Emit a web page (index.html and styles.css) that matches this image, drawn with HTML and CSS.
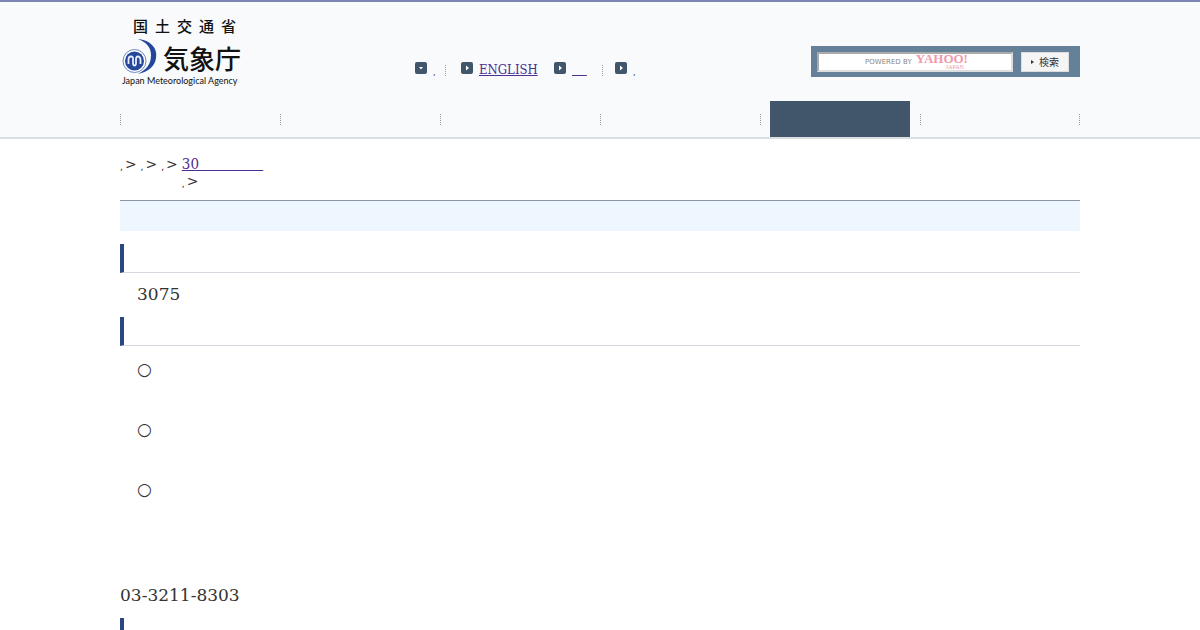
FILE: index.html
```html
<!DOCTYPE html>
<html lang="ja">
<head>
    <meta charset="UTF-8">
    <meta name="viewport" content="width=device-width, initial-scale=1.0">
    <title>気象庁</title>
    <link rel="stylesheet" href="styles.css">
</head>
<body>
    <header class="header">
        <div class="container header-top">
            <a class="logo" href="#">
                <span class="logo-ministry"><span>国</span><span>土</span><span>交</span><span>通</span><span>省</span></span>
                <span class="logo-main">
                    <svg class="logo-mark" width="38" height="36" viewBox="0 0 38 36" aria-hidden="true">
                        <path d="M16 0C28 1 36 9 34 19C33 28 25 33 16 35C25 30 29 25 29 16C29 8 24 3 16 0Z" fill="#24479b"/>
                        <circle cx="12.500" cy="22" r="11.500" fill="#fff" stroke="#6f88bf" stroke-width="1"/>
                        <circle cx="12.500" cy="22" r="9.500" fill="#24479b"/>
                        <path d="M6.500 25V20.500Q6.500 17.500 9 17.500T11 20.500V24Q11 26.500 12.500 26.500T14 24V20.500Q14 17.500 16 17.500T18.500 20.500V25" fill="none" stroke="#e6edf8" stroke-width="1.800"/>
                    </svg>
                    <span class="logo-name">気象庁</span>
                </span>
                <span class="logo-en">Japan Meteorological Agency</span>
            </a>
            <ul class="tools">
                <li class="tool-first">
                    <svg class="arrow" width="12" height="12" viewBox="0 0 12 12" aria-hidden="true"><rect width="12" height="12" rx="2" fill="#40566b"/><path d="M4 5H8L6 7.500Z" fill="#fff"/></svg>
                    <a class="mark" href="#">,</a>
                </li>
                <li class="tool-english">
                    <svg class="arrow" width="12" height="12" viewBox="0 0 12 12" aria-hidden="true"><rect width="12" height="12" rx="2" fill="#40566b"/><path d="M5 3.500V8.500L8 6Z" fill="#fff"/></svg>
                    <a href="#">ENGLISH</a>
                </li>
                <li class="tool-blank">
                    <svg class="arrow" width="12" height="12" viewBox="0 0 12 12" aria-hidden="true"><rect width="12" height="12" rx="2" fill="#40566b"/><path d="M5 3.500V8.500L8 6Z" fill="#fff"/></svg>
                    <a href="#">&nbsp;&nbsp;&nbsp;&nbsp;</a>
                </li>
                <li class="tool-last">
                    <svg class="arrow" width="12" height="12" viewBox="0 0 12 12" aria-hidden="true"><rect width="12" height="12" rx="2" fill="#40566b"/><path d="M5 3.500V8.500L8 6Z" fill="#fff"/></svg>
                    <a class="mark" href="#">,</a>
                </li>
            </ul>
            <form class="search">
                <div class="search-box">
                    <input class="search-input" id="search" type="text">
                    <label class="search-label" for="search">POWERED BY <span class="yahoo">YAHOO!<small>JAPAN</small></span></label>
                </div>
                <button class="search-button" type="submit"><svg width="4" height="6" viewBox="0 0 4 6" aria-hidden="true"><path d="M0 1L3 3L0 5Z" fill="#333"/></svg>検索</button>
            </form>
        </div>
        <nav class="container nav">
            <a href="#"></a>
            <a href="#"></a>
            <a href="#"></a>
            <a href="#"></a>
            <a class="current" href="#"></a>
            <a href="#"></a>
        </nav>
    </header>

    <main class="container">
        <div class="breadcrumb">
            <span><a class="mark" href="#">,</a>&gt;</span>
            <span><a class="mark" href="#">,</a>&gt;</span>
            <span><a class="mark" href="#">,</a>&gt;</span>
            <div class="breadcrumb-year">
                <a href="#">30&nbsp;&nbsp;&nbsp;&nbsp;&nbsp;&nbsp;&nbsp;&nbsp;&nbsp;&nbsp;&nbsp;&nbsp;&nbsp;&nbsp;&nbsp;</a>
                <span><a class="mark" href="#">,</a>&gt;</span>
            </div>
        </div>
        <h1 class="title"></h1>
        <h2 class="section-title"></h2>
        <p class="text">3075</p>
        <h2 class="section-title"></h2>
        <ul class="list">
            <li>○</li>
            <li>○</li>
            <li>○</li>
        </ul>
        <p class="phone">03-3211-8303</p>
        <h2 class="section-title"></h2>
    </main>
</body>
</html>
```
FILE: styles.css
```css
* {
    box-sizing: border-box;
}
body {
    margin: 0;
    font-family: 'DejaVu Serif', 'Noto Sans CJK JP', serif;
    font-size: 17px;
    line-height: 30px;
    color: #333;
    background-color: #fff;
}
a {
    color: #4b2f91;
}
ul {
    list-style: none;
    margin: 0;
    padding: 0;
}
.container {
    max-width: 960px;
    margin: 0 auto;
}
.header {
    border-top: 2px solid #7b86b2;
    border-bottom: 2px solid #dcdfe2;
    background-color: #f8fafc;
}
.header-top {
    display: flex;
    align-items: flex-start;
    height: 99px;
}

/* logo */
.logo {
    display: flex;
    flex-direction: column;
    width: 124px;
    padding: 15px 0 0 2px;
    color: #111;
    text-decoration: none;
    font-family: 'Noto Sans CJK JP', sans-serif;
}
.logo-ministry {
    display: flex;
    gap: 7px;
    padding-left: 11px;
    font-size: 15px;
    font-weight: 500;
    line-height: 18px;
}
.logo-main {
    display: flex;
    gap: 3px;
    height: 39px;
    padding-top: 4px;
}
.logo-name {
    font-size: 26px;
    font-weight: 500;
    line-height: 38px;
}
.logo-en {
    font-family: Lato, sans-serif;
    font-size: 9px;
    line-height: 14px;
    white-space: nowrap;
}

/* tool links */
.tools {
    display: flex;
    padding-top: 58px;
    margin-left: 171px;
    font-family: 'DejaVu Serif Condensed', 'DejaVu Serif', serif;
    font-stretch: condensed;
    font-size: 13px;
    line-height: 20px;
}
.tools li {
    display: flex;
    gap: 6px;
}
.arrow {
    flex: none;
    margin-top: 2px;
}
.tool-first {
    width: 46px;
}
.tool-english {
    width: 93px;
}
.tool-blank {
    width: 61px;
}
.tool-first,
.tool-blank {
    background: repeating-linear-gradient(#999 0 1px, transparent 1px 2px) right 15px top 5px / 1px 11px no-repeat;
}
.tool-blank {
    background-position: right 12px top 5px;
}
.mark {
    font-size: 9px;
    text-decoration: none;
    color: #222;
}
.tools .mark {
    padding-top: 2px;
}

/* search */
.search {
    display: flex;
    gap: 8px;
    width: 269px;
    margin: 44px 0 0 auto;
    padding: 6px 11px 5px 6px;
    background-color: #658199;
}
.search-box {
    position: relative;
    flex: 1;
}
.search-input {
    display: block;
    width: 100%;
    height: 20px;
    border: 2px solid #aaa;
    border-right-color: #ddd;
    border-bottom-color: #ddd;
    background-color: #fff;
}
.search-label {
    position: absolute;
    top: 2px;
    left: 48px;
    display: flex;
    gap: 4px;
    font-family: 'DejaVu Sans', sans-serif;
    font-size: 7px;
    line-height: 16px;
    color: #888;
    white-space: nowrap;
}
.yahoo {
    display: flex;
    flex-direction: column;
    font-family: 'Liberation Serif', serif;
    font-size: 13px;
    font-weight: bold;
    line-height: 10px;
    color: #ee9aab;
}
.yahoo small {
    align-self: flex-end;
    padding-right: 4px;
    font-size: 6px;
    font-weight: normal;
    line-height: 6px;
}
.search-button {
    display: flex;
    align-items: center;
    justify-content: center;
    gap: 4px;
    width: 48px;
    height: 20px;
    padding: 0;
    border: 1px solid #ddd;
    background-color: #f5f5f5;
    font-family: 'Noto Sans CJK JP', sans-serif;
    font-size: 10px;
    line-height: 16px;
    color: #333;
}

/* global menu */
.nav {
    display: grid;
    grid-template-columns: repeat(6, 1fr);
    background: repeating-linear-gradient(#999 0 1px, transparent 1px 2px) right 13px / 1px 11px no-repeat;
}
.nav a {
    height: 36px;
    padding: 0 10px;
    background: repeating-linear-gradient(#999 0 1px, transparent 1px 2px) left 13px / 1px 11px no-repeat;
}
.nav .current::before {
    content: "";
    display: block;
    height: 36px;
    background-color: #41566b;
}

/* contents */
.breadcrumb {
    display: flex;
    gap: 4px;
    padding-top: 16px;
    font-size: 14px;
    line-height: 18px;
}
.breadcrumb span {
    display: flex;
    gap: 2px;
    font-family: 'DejaVu Sans', sans-serif;
}
.breadcrumb .mark {
    padding-top: 3px;
}
.breadcrumb-year > a {
    display: block;
    font-family: 'DejaVu Serif Condensed', 'DejaVu Serif', serif;
    font-stretch: condensed;
    font-size: 15px;
}
.breadcrumb-year span {
    line-height: 16px;
}
.title {
    height: 31px;
    margin: 8px 0 13px;
    border-top: 1px solid #8795a5;
    background-color: #eef7ff;
}
.section-title {
    height: 29px;
    margin: 0;
    border-left: 4px solid #2c4681;
    border-bottom: 1px solid #d5d9df;
}
.text {
    margin: 6px 0 8px;
    padding-left: 17px;
}
.list {
    padding: 8px 0 0 17px;
    font-family: 'DejaVu Sans', sans-serif;
}
.list li {
    height: 60px;
}
.phone {
    margin: 46px 0 8px;
}
```
